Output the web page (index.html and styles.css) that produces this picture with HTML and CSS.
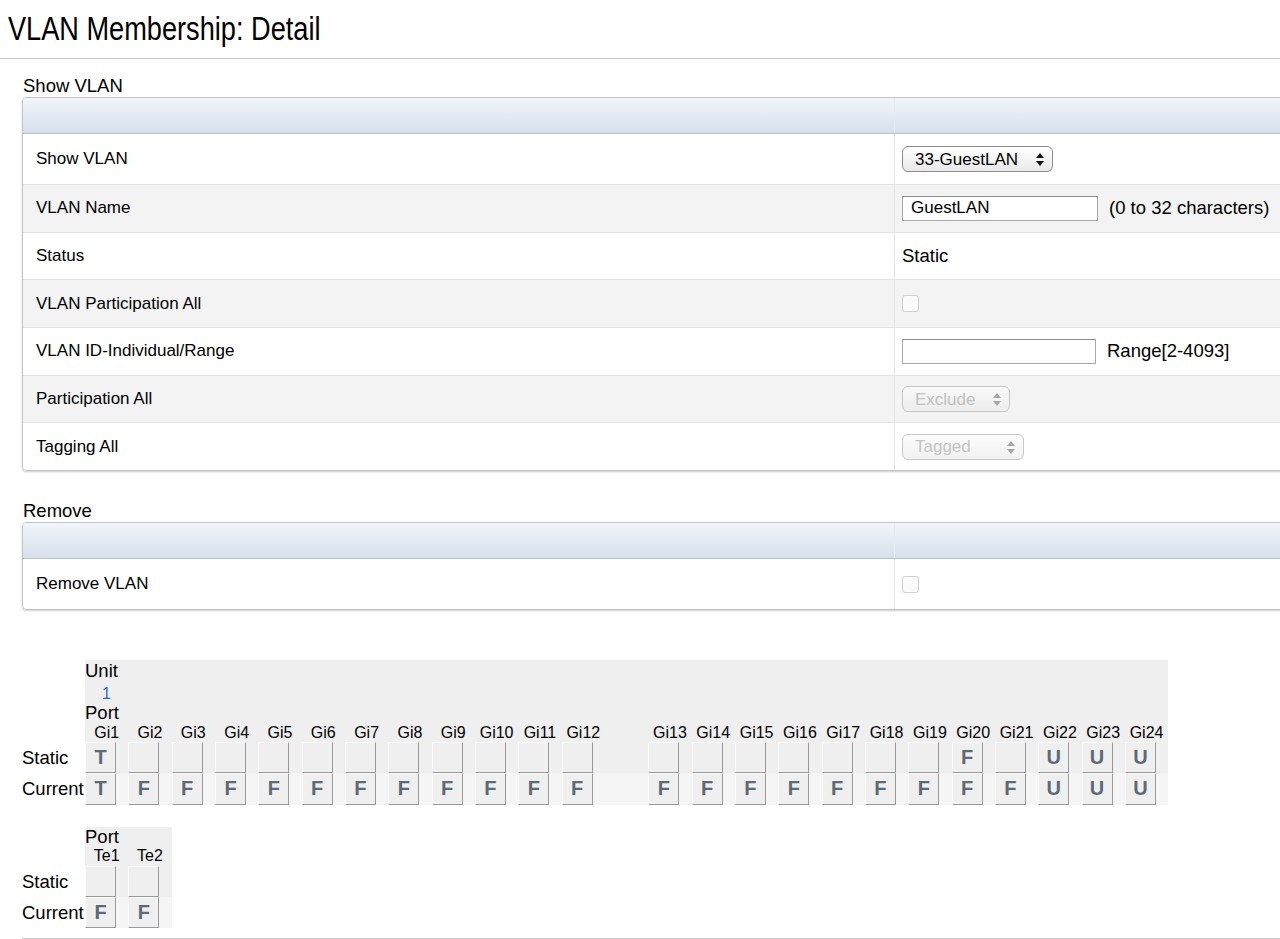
FILE: index.html
```html
<!DOCTYPE html>
<html lang="en">
<head>
    <meta charset="UTF-8">
    <title>VLAN Membership: Detail</title>
    <link rel="stylesheet" href="styles.css">
</head>
<body>
    <h1 class="page-title"><span class="page-title-text">VLAN Membership: Detail</span></h1>

    <div class="content">
        <!-- Show VLAN -->
        <div class="section first">
            <div class="section-title">Show VLAN</div>
            <div class="panel">
                <div class="panel-head"><div class="head-cell"></div><div></div></div>
                <div class="row tall">
                    <div class="row-label">Show VLAN</div>
                    <div class="row-value">
                        <div class="select-box wide">
                            <select class="select"><option>33-GuestLAN</option></select>
                            <svg class="select-arrows" width="8" height="13" viewBox="0 0 8 13"><polygon points="0,5 4,0 8,5"/><polygon points="0,8 4,13 8,8"/></svg>
                        </div>
                    </div>
                </div>
                <div class="row alt">
                    <div class="row-label">VLAN Name</div>
                    <div class="row-value">
                        <input class="text-input" type="text" value="GuestLAN">
                        <span class="hint">(0 to 32 characters)</span>
                    </div>
                </div>
                <div class="row">
                    <div class="row-label">Status</div>
                    <div class="row-value">Static</div>
                </div>
                <div class="row alt">
                    <div class="row-label">VLAN Participation All</div>
                    <div class="row-value"><input class="check" type="checkbox" disabled></div>
                </div>
                <div class="row">
                    <div class="row-label">VLAN ID-Individual/Range</div>
                    <div class="row-value">
                        <input class="text-input short" type="text" value="">
                        <span class="hint">Range[2-4093]</span>
                    </div>
                </div>
                <div class="row alt">
                    <div class="row-label">Participation All</div>
                    <div class="row-value">
                        <div class="select-box exclude">
                            <select class="select" disabled><option>Exclude</option></select>
                            <svg class="select-arrows" width="8" height="13" viewBox="0 0 8 13"><polygon points="0,5 4,0 8,5"/><polygon points="0,8 4,13 8,8"/></svg>
                        </div>
                    </div>
                </div>
                <div class="row">
                    <div class="row-label">Tagging All</div>
                    <div class="row-value">
                        <div class="select-box tagged">
                            <select class="select" disabled><option>Tagged</option></select>
                            <svg class="select-arrows" width="8" height="13" viewBox="0 0 8 13"><polygon points="0,5 4,0 8,5"/><polygon points="0,8 4,13 8,8"/></svg>
                        </div>
                    </div>
                </div>
            </div>
        </div>

        <!-- Remove -->
        <div class="section">
            <div class="section-title">Remove</div>
            <div class="panel">
                <div class="panel-head"><div class="head-cell"></div><div></div></div>
                <div class="row tall">
                    <div class="row-label">Remove VLAN</div>
                    <div class="row-value"><input class="check" type="checkbox" disabled></div>
                </div>
            </div>
        </div>

        <!-- Port membership, unit 1 -->
        <div class="port-grid ports-gi">
            <div></div><div class="band span-all">Unit</div>
            <div></div><div class="band span-all"><span class="unit-no">1</span></div>
            <div></div><div class="band span-all">Port</div>

            <div></div>
            <div class="port-name">Gi1</div><div class="port-name">Gi2</div><div class="port-name">Gi3</div><div class="port-name">Gi4</div>
            <div class="port-name">Gi5</div><div class="port-name">Gi6</div><div class="port-name">Gi7</div><div class="port-name">Gi8</div>
            <div class="port-name">Gi9</div><div class="port-name">Gi10</div><div class="port-name">Gi11</div><div class="port-name">Gi12</div>
            <div class="port-name"></div>
            <div class="port-name">Gi13</div><div class="port-name">Gi14</div><div class="port-name">Gi15</div><div class="port-name">Gi16</div>
            <div class="port-name">Gi17</div><div class="port-name">Gi18</div><div class="port-name">Gi19</div><div class="port-name">Gi20</div>
            <div class="port-name">Gi21</div><div class="port-name">Gi22</div><div class="port-name">Gi23</div><div class="port-name">Gi24</div>

            <div class="row-name">Static</div>
            <div class="port-cell"><div class="port-box">T</div></div>
            <div class="port-cell"><div class="port-box"></div></div>
            <div class="port-cell"><div class="port-box"></div></div>
            <div class="port-cell"><div class="port-box"></div></div>
            <div class="port-cell"><div class="port-box"></div></div>
            <div class="port-cell"><div class="port-box"></div></div>
            <div class="port-cell"><div class="port-box"></div></div>
            <div class="port-cell"><div class="port-box"></div></div>
            <div class="port-cell"><div class="port-box"></div></div>
            <div class="port-cell"><div class="port-box"></div></div>
            <div class="port-cell"><div class="port-box"></div></div>
            <div class="port-cell"><div class="port-box"></div></div>
            <div class="port-cell"></div>
            <div class="port-cell"><div class="port-box"></div></div>
            <div class="port-cell"><div class="port-box"></div></div>
            <div class="port-cell"><div class="port-box"></div></div>
            <div class="port-cell"><div class="port-box"></div></div>
            <div class="port-cell"><div class="port-box"></div></div>
            <div class="port-cell"><div class="port-box"></div></div>
            <div class="port-cell"><div class="port-box"></div></div>
            <div class="port-cell"><div class="port-box">F</div></div>
            <div class="port-cell"><div class="port-box"></div></div>
            <div class="port-cell"><div class="port-box">U</div></div>
            <div class="port-cell"><div class="port-box">U</div></div>
            <div class="port-cell"><div class="port-box">U</div></div>

            <div class="row-name">Current</div>
            <div class="port-cell current"><div class="port-box">T</div></div>
            <div class="port-cell current"><div class="port-box">F</div></div>
            <div class="port-cell current"><div class="port-box">F</div></div>
            <div class="port-cell current"><div class="port-box">F</div></div>
            <div class="port-cell current"><div class="port-box">F</div></div>
            <div class="port-cell current"><div class="port-box">F</div></div>
            <div class="port-cell current"><div class="port-box">F</div></div>
            <div class="port-cell current"><div class="port-box">F</div></div>
            <div class="port-cell current"><div class="port-box">F</div></div>
            <div class="port-cell current"><div class="port-box">F</div></div>
            <div class="port-cell current"><div class="port-box">F</div></div>
            <div class="port-cell current"><div class="port-box">F</div></div>
            <div class="port-cell current"></div>
            <div class="port-cell current"><div class="port-box">F</div></div>
            <div class="port-cell current"><div class="port-box">F</div></div>
            <div class="port-cell current"><div class="port-box">F</div></div>
            <div class="port-cell current"><div class="port-box">F</div></div>
            <div class="port-cell current"><div class="port-box">F</div></div>
            <div class="port-cell current"><div class="port-box">F</div></div>
            <div class="port-cell current"><div class="port-box">F</div></div>
            <div class="port-cell current"><div class="port-box">F</div></div>
            <div class="port-cell current"><div class="port-box">F</div></div>
            <div class="port-cell current"><div class="port-box">U</div></div>
            <div class="port-cell current"><div class="port-box">U</div></div>
            <div class="port-cell current"><div class="port-box">U</div></div>
        </div>

        <!-- Port membership, 10G ports -->
        <div class="port-grid ports-te">
            <div></div><div class="band span-all">Port</div>

            <div></div>
            <div class="port-name">Te1</div><div class="port-name">Te2</div>

            <div class="row-name">Static</div>
            <div class="port-cell"><div class="port-box"></div></div>
            <div class="port-cell"><div class="port-box"></div></div>

            <div class="row-name">Current</div>
            <div class="port-cell current"><div class="port-box">F</div></div>
            <div class="port-cell current"><div class="port-box">F</div></div>
        </div>

        <div class="bottom-rule"></div>
    </div>
</body>
</html>
```

FILE: styles.css
```css
body {
    margin: 0;
    font-family: "Liberation Sans", Arial, Helvetica, sans-serif;
    color: #000000;
    background-color: #ffffff;
    overflow-x: hidden;
}

.page-title {
    margin: 0;
    padding: 9px 8px 0;
    height: 49px;
    font-size: 33px;
    font-weight: normal;
    line-height: 40px;
    white-space: nowrap;
    border-bottom: 1px solid #c9c9c9;
}

/* the original heading face is a narrow grotesque */
.page-title-text {
    display: inline-block;
    transform: scaleX(0.823);
    transform-origin: left center;
}

.content {
    padding-left: 22px;
}

.section {
    margin-bottom: 29px;
}

.section.first {
    margin-top: 16px;
}

.section-title {
    font-size: 18.5px;
    line-height: 22px;
    padding-left: 1px;
}

/* form panels */

.panel {
    width: 1300px;
    border: 1px solid #c4c4c4;
    border-radius: 4px;
    box-shadow: 0 1px 2px rgba(0, 0, 0, 0.2);
    overflow: hidden;
}

.panel-head {
    display: grid;
    grid-template-columns: 872px 1fr;
    height: 35px;
    background: linear-gradient(#f1f5fb, #d6e0ec);
    border-bottom: 1px solid #b7c3d1;
}

.head-cell {
    border-right: 1px solid #e6ebf2;
}

.row {
    display: grid;
    grid-template-columns: 872px 1fr;
    height: 47.7px;
    box-sizing: border-box;
    border-top: 1px solid #e3e3e3;
}

.row.tall {
    height: 50px;
    border-top: none;
}

.row.alt {
    background-color: #f3f3f3;
}

.row-label {
    display: flex;
    align-items: center;
    padding-left: 13px;
    font-size: 17px;
    border-right: 1px solid #e3e3e3;
}

.row-value {
    display: flex;
    align-items: center;
    gap: 11px;
    padding-left: 7px;
    font-size: 18.5px;
}

.select-box {
    position: relative;
    height: 26px;
}

.select-box.wide { width: 151px; }
.select-box.exclude { width: 108px; }
.select-box.tagged { width: 122px; }

.select {
    appearance: none;
    -webkit-appearance: none;
    width: 100%;
    height: 26px;
    margin: 0;
    padding: 0 0 0 12px;
    font-family: "Liberation Sans", Arial, sans-serif;
    font-size: 17px;
    color: #000000;
    border: 1px solid #8c8c8c;
    border-radius: 6px;
    background: linear-gradient(#ffffff, #e9e9e9);
    box-shadow: inset 0 1px 0 #ffffff;
}

.select:disabled {
    color: #ababab;
    border-color: #b3b3b3;
    background: linear-gradient(#fbfbfb, #ebebeb);
}

.select-arrows {
    position: absolute;
    right: 9px;
    top: 7px;
    fill: #111111;
    pointer-events: none;
}

.select:disabled + .select-arrows {
    fill: #a5a5a5;
}

.text-input {
    box-sizing: border-box;
    width: 196px;
    height: 25px;
    margin: 0;
    padding: 0 8px;
    font-family: "Liberation Sans", Arial, sans-serif;
    font-size: 17px;
    border: 1px solid #a9a9a9;
    border-top-color: #8e8e8e;
    background-color: #ffffff;
}

.text-input.short {
    width: 194px;
}

.hint {
    font-size: 18.5px;
}

.check {
    appearance: none;
    -webkit-appearance: none;
    width: 17px;
    height: 17px;
    margin: 0;
    border: 1px solid #d0d0d0;
    border-radius: 3px;
    background-color: #fbfbfb;
}

/* port membership grid */

.port-grid {
    display: grid;
    grid-template-columns: 63px repeat(25, 43.333px);
    grid-template-rows: 22px 20px 22px 18px 31px 32px;
    margin-top: 50px;
}

.ports-te {
    grid-template-columns: 63px repeat(2, 43.333px);
    grid-template-rows: 20px 19px 31px 31px;
    margin-top: 22px;
}

.band {
    background-color: #efefef;
    font-size: 18.5px;
    line-height: 22px;
}

.ports-te .band {
    line-height: 20px;
}

.span-all {
    grid-column: 2 / -1;
}

.unit-no {
    display: inline-block;
    width: 43px;
    text-align: center;
    color: #2c68cc;
    font-size: 16px;
    line-height: 20px;
}

.port-name {
    background-color: #efefef;
    text-align: center;
    font-size: 16px;
    line-height: 18px;
    white-space: nowrap;
}

.row-name {
    display: flex;
    align-items: center;
    font-size: 18.5px;
}

.port-cell {
    background-color: #efefef;
}

.port-cell.current {
    background-color: #f5f5f5;
}

.port-box {
    box-sizing: border-box;
    width: 31px;
    height: 100%;
    border: 1px solid;
    border-color: #fbfbfb #9a9a9a #9a9a9a #fbfbfb;
    background-color: #efefef;
    text-align: center;
    font-size: 20px;
    font-weight: bold;
    line-height: 28px;
    color: #5c6a78;
}

.bottom-rule {
    margin-top: 10px;
    border-top: 1px solid #c9c9c9;
}
```
